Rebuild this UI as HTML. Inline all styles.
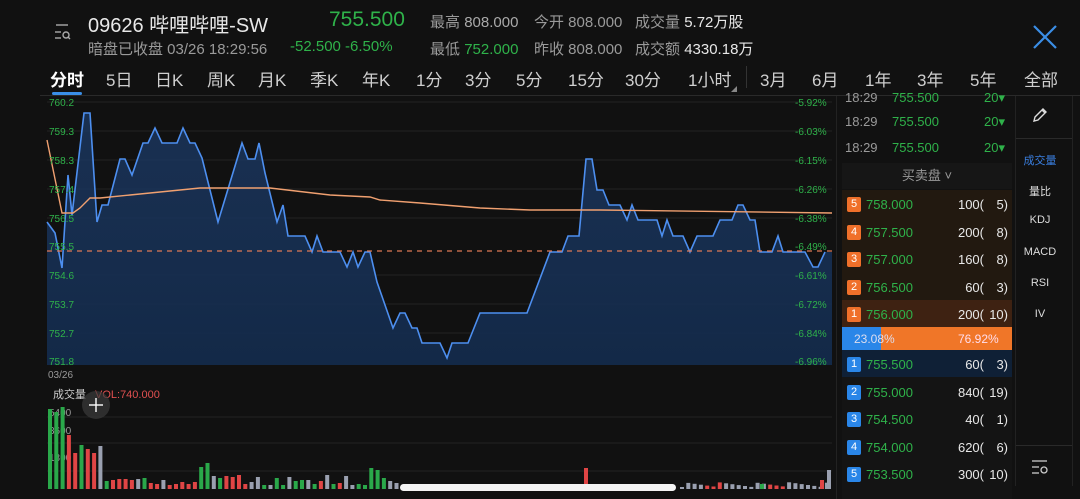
<!DOCTYPE html>
<html><head><meta charset="utf-8"><style>
*{margin:0;padding:0;box-sizing:border-box}
body{width:1080px;height:499px;background:#111111;color:#ddd;font-family:"Liberation Sans","Noto Sans CJK SC",sans-serif;position:relative;overflow:hidden}
.a{position:absolute;white-space:nowrap}
.g{color:#2fb24a}
.gr{color:#9a9a9a}
.w{color:#e8e8e8}
.tab{position:absolute;top:66px;font-size:17px;color:#cfcfcf}
.row{position:absolute;left:842px;width:170px;height:27px;font-size:13px}
.num{position:absolute;left:5px;top:6px;width:14px;height:15px;border-radius:2px;color:#fff;font-size:11px;text-align:center;line-height:15px}
.o{background:#f0702a}.b{background:#2a86e8}
.side{position:absolute;left:1010px;width:60px;text-align:center;font-size:11px;color:#ddd}
</style></head><body>
<svg class="a" style="left:52px;top:22px" width="22" height="20"><g stroke="#aaa" stroke-width="1.4" fill="none"><line x1="4" y1="3" x2="16" y2="3"/><line x1="3" y1="10" x2="9" y2="10"/><line x1="3" y1="16" x2="9" y2="16"/><circle cx="14" cy="13" r="3"/><line x1="16" y1="15" x2="18" y2="17"/></g></svg>
<div class="a w" style="left:88px;top:9px;font-size:20px">09626 哔哩哔哩-SW</div>
<div class="a g" style="left:329px;top:8px;font-size:21px">755.500</div>
<div class="a gr" style="left:88px;top:38px;font-size:15px">暗盘已收盘 03/26 18:29:56</div>
<div class="a g" style="left:290px;top:38px;font-size:15px">-52.500 -6.50%</div>
<div class="a" style="left:430px;top:11px;font-size:15px"><span class="gr">最高</span> <span style="color:#aaa">808.000</span></div>
<div class="a" style="left:430px;top:38px;font-size:15px"><span class="gr">最低</span> <span class="g">752.000</span></div>
<div class="a" style="left:534px;top:11px;font-size:15px"><span class="gr">今开 808.000</span></div>
<div class="a" style="left:534px;top:38px;font-size:15px"><span class="gr">昨收 808.000</span></div>
<div class="a" style="left:635px;top:11px;font-size:15px"><span class="gr">成交量</span> <span class="w">5.72万股</span></div>
<div class="a" style="left:635px;top:38px;font-size:15px"><span class="gr">成交额</span> <span class="w">4330.18万</span></div>
<svg class="a" style="left:1032px;top:24px" width="26" height="26"><g stroke="#3a8ee6" stroke-width="2.2"><line x1="2" y1="2" x2="24" y2="24"/><line x1="24" y1="2" x2="2" y2="24"/></g></svg>
<div class="tab" style="left:50px;color:#fff;font-weight:bold">分时</div>
<div class="a" style="left:52px;top:92px;width:30px;height:3px;background:#3a8ee6;border-radius:2px"></div>
<div class="tab" style="left:106px">5日</div>
<div class="tab" style="left:155px">日K</div>
<div class="tab" style="left:207px">周K</div>
<div class="tab" style="left:258px">月K</div>
<div class="tab" style="left:310px">季K</div>
<div class="tab" style="left:362px">年K</div>
<div class="tab" style="left:416px">1分</div>
<div class="tab" style="left:465px">3分</div>
<div class="tab" style="left:516px">5分</div>
<div class="tab" style="left:568px">15分</div>
<div class="tab" style="left:625px">30分</div>
<div class="tab" style="left:688px">1小时</div>
<div class="a" style="left:731px;top:86px;width:0;height:0;border-left:6px solid transparent;border-bottom:6px solid #888"></div>
<div class="a" style="left:746px;top:66px;width:1px;height:22px;background:#333"></div>
<div class="tab" style="left:760px">3月</div>
<div class="tab" style="left:812px">6月</div>
<div class="tab" style="left:865px">1年</div>
<div class="tab" style="left:917px">3年</div>
<div class="tab" style="left:970px">5年</div>
<div class="tab" style="left:1024px">全部</div>
<div class="a" style="left:40px;top:95px;width:1040px;height:1px;background:#2a2a2a"></div>
<svg class="a" style="left:0;top:0" width="840" height="499">
<g stroke="#232323" stroke-width="1">
<line x1="47" y1="102" x2="832" y2="102"/><line x1="47" y1="131" x2="832" y2="131"/><line x1="47" y1="160" x2="832" y2="160"/><line x1="47" y1="189" x2="832" y2="189"/><line x1="47" y1="218" x2="832" y2="218"/><line x1="47" y1="275" x2="832" y2="275"/><line x1="47" y1="304" x2="832" y2="304"/><line x1="47" y1="333" x2="832" y2="333"/>
<line x1="47" y1="417" x2="832" y2="417"/><line x1="47" y1="443" x2="832" y2="443"/><line x1="47" y1="471" x2="832" y2="471"/>
</g>
<defs><linearGradient id="f" x1="0" y1="0" x2="0" y2="1"><stop offset="0" stop-color="#1c3a66" stop-opacity=".75"/><stop offset="1" stop-color="#132a4a" stop-opacity=".95"/></linearGradient></defs>
<polygon fill="url(#f)" points="47,365 47,222 55,233 62,268 68,175 72,215 84,113 90,113 97,222 102,205 108,205 120,159 125,159 132,175 143,143 148,143 155,128 162,143 177,143 183,128 190,143 195,143 202,158 218,222 242,143 248,159 255,159 259,143 265,173 277,222 283,205 288,236 305,236 312,252 317,236 323,252 340,252 347,267 353,252 358,267 365,252 370,252 377,282 393,328 400,313 405,313 412,328 417,328 422,343 440,343 447,358 452,343 468,343 480,313 527,313 550,252 562,252 568,236 579,236 586,159 592,159 597,190 603,190 609,205 620,205 627,220 632,205 638,220 657,220 662,236 667,220 673,236 683,236 690,252 697,236 713,236 720,220 732,220 738,205 743,205 750,220 755,220 760,252 772,252 778,236 783,252 805,252 813,267 818,267 825,252 832,252 832,365"/>
<polyline fill="none" stroke="#4d8ff0" stroke-width="1.6" points="47,222 55,233 62,268 68,175 72,215 84,113 90,113 97,222 102,205 108,205 120,159 125,159 132,175 143,143 148,143 155,128 162,143 177,143 183,128 190,143 195,143 202,158 218,222 242,143 248,159 255,159 259,143 265,173 277,222 283,205 288,236 305,236 312,252 317,236 323,252 340,252 347,267 353,252 358,267 365,252 370,252 377,282 393,328 400,313 405,313 412,328 417,328 422,343 440,343 447,358 452,343 468,343 480,313 527,313 550,252 562,252 568,236 579,236 586,159 592,159 597,190 603,190 609,205 620,205 627,220 632,205 638,220 657,220 662,236 667,220 673,236 683,236 690,252 697,236 713,236 720,220 732,220 738,205 743,205 750,220 755,220 760,252 772,252 778,236 783,252 805,252 813,267 818,267 825,252"/>
<polyline fill="none" stroke="#f0a070" stroke-width="1.4" points="47,140 62,213 73,213 80,208 90,198 100,198 130,195 200,188 270,188 330,195 370,197 380,200 420,203 480,208 530,210 600,210 832,213"/>
<line x1="47" y1="251" x2="832" y2="251" stroke="#e07a55" stroke-width="1.2" stroke-dasharray="5,5"/>
<g font-size="10" fill="#2fb24a" font-family="Liberation Sans">
<text x="49" y="106">760.2</text><text x="49" y="135">759.3</text><text x="49" y="164">758.3</text><text x="49" y="193">757.4</text><text x="49" y="222">756.5</text><text x="49" y="250">755.5</text><text x="49" y="279">754.6</text><text x="49" y="308">753.7</text><text x="49" y="337">752.7</text><text x="49" y="365">751.8</text>
<text x="795" y="106">-5.92%</text><text x="795" y="135">-6.03%</text><text x="795" y="164">-6.15%</text><text x="795" y="193">-6.26%</text><text x="795" y="222">-6.38%</text><text x="795" y="250">-6.49%</text><text x="795" y="279">-6.61%</text><text x="795" y="308">-6.72%</text><text x="795" y="337">-6.84%</text><text x="795" y="365">-6.96%</text>
</g>
<text x="48" y="378" font-size="10" fill="#999">03/26</text>
<text x="53" y="398" font-size="11" fill="#ccc">成交量</text>
<text x="95" y="398" font-size="11" fill="#e05050">VOL:740.000</text>
<g font-size="10" fill="#999"><text x="49" y="416">5400</text><text x="49" y="434">3600</text><text x="49" y="461">1800</text></g>
<g id="bars"></g>
<circle cx="96" cy="405" r="14" fill="#3a3a3a" opacity=".7"/>
<g stroke="#fff" stroke-width="1.4"><line x1="96" y1="398" x2="96" y2="412"/><line x1="89" y1="405" x2="103" y2="405"/></g>
</svg>
<div class="a" style="left:400px;top:484px;width:276px;height:7px;background:#f4f4f4;border-radius:4px"></div>
<div class="a" style="left:836px;top:96px;width:1px;height:403px;background:#222"></div>
<div class="row" style="top:86px"><span class="a gr" style="left:3px;top:4px">18:29</span><span class="a g" style="left:50px;top:4px">755.500</span><span class="a g" style="left:142px;top:4px">20▾</span></div>
<div class="row" style="top:110px"><span class="a gr" style="left:3px;top:4px">18:29</span><span class="a g" style="left:50px;top:4px">755.500</span><span class="a g" style="left:142px;top:4px">20▾</span></div>
<div class="row" style="top:136px"><span class="a gr" style="left:3px;top:4px">18:29</span><span class="a g" style="left:50px;top:4px">755.500</span><span class="a g" style="left:142px;top:4px">20▾</span></div>
<div class="a" style="left:842px;top:163px;width:170px;height:26px;background:#161616;text-align:center;font-size:13px;color:#999;line-height:26px">买卖盘 ˅</div>
<div class="a" style="left:842px;top:190px;width:170px;height:110px;background:#221910"></div>
<div class="a" style="left:842px;top:300px;width:170px;height:27px;background:#3e2212"></div>
<div class="a" style="left:842px;top:327px;width:170px;height:23px;background:#f07628"></div>
<div class="a" style="left:842px;top:327px;width:39px;height:23px;background:#2a86e8"></div>
<div class="a" style="left:854px;top:332px;font-size:12px;color:#dde">23.08%</div>
<div class="a" style="left:958px;top:332px;font-size:12px;color:#fde">76.92%</div>
<div class="a" style="left:842px;top:350px;width:170px;height:27px;background:#0f2036"></div>
<div class="a" style="left:842px;top:377px;width:170px;height:122px;background:#141414"></div>
<div id="book"></div>
<div class="a" style="left:1015px;top:96px;width:58px;height:390px;border-left:1px solid #222;border-right:1px solid #222"></div>
<svg class="a" style="left:1031px;top:106px" width="18" height="18"><path d="M3 15 L4 11 L12 3 L15 6 L7 14 Z M11 4 L14 7" fill="none" stroke="#ddd" stroke-width="1.4"/></svg>
<div class="a" style="left:1016px;top:138px;width:56px;height:1px;background:#2a2a2a"></div>
<div class="side" style="top:152px;color:#3a7fe0">成交量</div>
<div class="side" style="top:183px">量比</div>
<div class="side" style="top:214px">KDJ</div>
<div class="side" style="top:246px">MACD</div>
<div class="side" style="top:277px">RSI</div>
<div class="side" style="top:308px">IV</div>
<div class="a" style="left:1016px;top:445px;width:56px;height:1px;background:#2a2a2a"></div>
<svg class="a" style="left:1030px;top:458px" width="20" height="18"><g stroke="#ccc" stroke-width="1.3" fill="none"><line x1="2" y1="3" x2="17" y2="3"/><line x1="2" y1="9" x2="9" y2="9"/><line x1="2" y1="15" x2="9" y2="15"/><circle cx="14" cy="12" r="3"/></g></svg>
<script>
var rows=[[5,'758.000','100(','5)','o',190],[4,'757.500','200(','8)','o',218],[3,'757.000','160(','8)','o',245],[2,'756.500','60(','3)','o',273],[1,'756.000','200(','10)','o',300],[1,'755.500','60(','3)','b',350],[2,'755.000','840(','19)','b',378],[3,'754.500','40(','1)','b',405],[4,'754.000','620(','6)','b',433],[5,'753.500','300(','10)','b',460]];
var h='';rows.forEach(function(r){h+='<div class="row" style="top:'+(r[5]+1)+'px"><span class="num '+r[4]+'">'+r[0]+'</span><span class="a g" style="left:24px;top:6px">'+r[1]+'</span><span class="a w" style="left:106px;top:6px;width:36px;text-align:right">'+r[2]+'</span><span class="a w" style="left:144px;top:6px;width:22px;text-align:right">'+r[3]+'</span></div>';});
document.getElementById('book').innerHTML=h;
var hs=[80,77,82,54,36,44,40,36,43,8,9,10,10,9,10,11,6,5,9,4,5,7,5,7,22,26,13,11,13,12,14,5,7,12,4,4,11,4,12,8,9,9,5,8,14,5,6,13,4,5,4,21,19,11,8,6];
var cs='gggrrgrrwgrrrrwgrrwrrrrrggwgrrrrwwgwggwggwgrwgrwwggggg';
var col={g:'#2aa84a',r:'#e04545',w:'#9aa0b0'};var s='';
for(var i=0;i<hs.length;i++){var x=48+i*6.3;s+='<rect x="'+x+'" y="'+(489-hs[i])+'" width="4" height="'+hs[i]+'" fill="'+col[cs[i]||'w']+'"/>';}
for(var x=680;x<830;x+=6.3){var hh=2+((x*7)%5);s+='<rect x="'+x+'" y="'+(489-hh)+'" width="4" height="'+hh+'" fill="'+(((x|0)%3)?'#9aa0b0':'#e04545')+'"/>';}
s+='<rect x="584" y="468" width="4" height="21" fill="#e04545"/><rect x="820" y="480" width="4" height="9" fill="#e04545"/><rect x="827" y="470" width="4" height="19" fill="#9aa0b0"/><rect x="760" y="484" width="4" height="5" fill="#2aa84a"/>';
document.getElementById('bars').innerHTML=s;
</script>
</body></html>
